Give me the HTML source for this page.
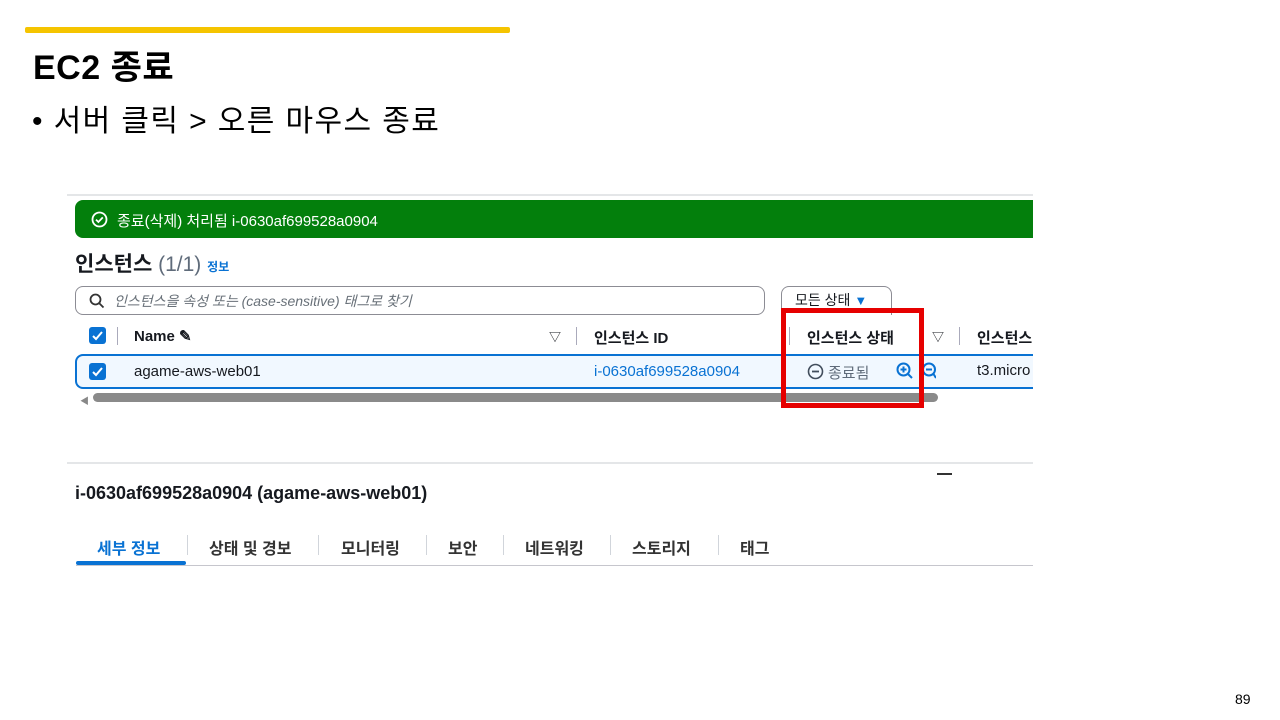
<!DOCTYPE html>
<html><head><meta charset="utf-8"><style>
*{margin:0;padding:0;box-sizing:border-box}
body{width:1280px;height:720px;background:#fff;position:relative;overflow:hidden;font-family:"Liberation Sans","Noto Sans CJK KR",sans-serif;color:#16191f}
.a{position:absolute;white-space:nowrap}
.sep{position:absolute;width:1px;background:#aab;}
</style></head><body>
<div class="a" style="left:25px;top:27px;width:485px;height:6px;background:#f5c400;border-radius:2px"></div>
<div class="a" style="left:33px;top:40px;font-size:34px;font-weight:bold;color:#000;letter-spacing:0.5px">EC2 종료</div>
<div class="a" style="left:32px;top:96px;font-size:30px;color:#000;letter-spacing:1.4px">• 서버 클릭 &gt; 오른 마우스 종료</div>

<div class="a" style="left:67px;top:194px;width:966px;height:2px;background:#e4e6e8"></div>
<div class="a" style="left:75px;top:200px;width:958px;height:38px;background:#037f0c;border-radius:8px 0 0 8px"></div>
<svg class="a" style="left:91px;top:211px" width="17" height="17" viewBox="0 0 17 17"><circle cx="8.5" cy="8.5" r="7" fill="none" stroke="#fff" stroke-width="1.8"/><path d="M5 8.6l2.4 2.4 4.4-4.6" fill="none" stroke="#fff" stroke-width="1.8"/></svg>
<div class="a" style="left:117px;top:210px;font-size:15px;color:#fff">종료(삭제) 처리됨 i-0630af699528a0904</div>

<div class="a" style="left:75px;top:248px;font-size:21px;font-weight:bold">인스턴스 <span style="font-weight:normal;color:#5f6b7a">(1/1)</span> <span style="font-size:12px;color:#0972d3;font-weight:bold">정보</span></div>

<div class="a" style="left:75px;top:286px;width:690px;height:29px;border:1.5px solid #8c8c94;border-radius:8px"></div>
<svg class="a" style="left:89px;top:293px" width="16" height="16" viewBox="0 0 16 16"><circle cx="6.5" cy="6.5" r="5" fill="none" stroke="#333" stroke-width="1.8"/><path d="M10 10l4.5 4.5" stroke="#333" stroke-width="1.8"/></svg>
<div class="a" style="left:114px;top:291px;font-size:14px;color:#687078;font-style:italic">인스턴스을 속성 또는 (case-sensitive) 태그로 찾기</div>
<div class="a" style="left:781px;top:286px;width:111px;height:29px;border:1.5px solid #8c8c94;border-radius:8px 8px 0 0;border-bottom:none"></div>
<div class="a" style="left:795px;top:290px;font-size:14px">모든 상태 <span style="color:#0972d3;font-size:13px">▼</span></div>

<div class="a" style="left:89px;top:327px;width:17px;height:17px;background:#0972d3;border-radius:3px"></div>
<svg class="a" style="left:89px;top:327px" width="17" height="17"><path d="M4 9l3 3 6-7" fill="none" stroke="#fff" stroke-width="2"/></svg>
<div class="sep" style="left:117px;top:327px;height:18px"></div>
<div class="a" style="left:134px;top:327px;font-size:15px;font-weight:bold">Name ✎</div>
<div class="a" style="left:549px;top:328px;font-size:12px">▽</div>
<div class="sep" style="left:576px;top:327px;height:18px"></div>
<div class="a" style="left:594px;top:327px;font-size:15px;font-weight:bold">인스턴스 ID</div>
<div class="sep" style="left:789px;top:327px;height:18px"></div>
<div class="a" style="left:807px;top:327px;font-size:15px;font-weight:bold">인스턴스 상태</div>
<div class="a" style="left:932px;top:328px;font-size:12px">▽</div>
<div class="sep" style="left:959px;top:327px;height:18px"></div>
<div class="a" style="left:977px;top:327px;font-size:15px;font-weight:bold">인스턴스</div>

<div class="a" style="left:75px;top:354px;width:958px;height:35px;background:#f1f8ff;border:2px solid #0972d3;border-right:none;border-radius:8px 0 0 8px"></div>
<div class="a" style="left:89px;top:363px;width:17px;height:17px;background:#0972d3;border-radius:3px"></div>
<svg class="a" style="left:89px;top:363px" width="17" height="17"><path d="M4 9l3 3 6-7" fill="none" stroke="#fff" stroke-width="2"/></svg>
<div class="a" style="left:134px;top:363px;font-size:15px">agame-aws-web01</div>
<div class="a" style="left:594px;top:363px;font-size:15px;color:#0972d3">i-0630af699528a0904</div>
<svg class="a" style="left:807px;top:363px" width="17" height="17"><circle cx="8.5" cy="8.5" r="7" fill="none" stroke="#414d5c" stroke-width="1.6"/><path d="M5 8.5h7" stroke="#414d5c" stroke-width="1.8"/></svg>
<div class="a" style="left:828px;top:362px;font-size:15px;color:#5f6b7a">종료됨</div>
<svg class="a" style="left:896px;top:362px" width="40" height="18"><circle cx="7.5" cy="7.5" r="6" fill="none" stroke="#0972d3" stroke-width="2"/><path d="M12 12l4 4M4.5 7.5h6M7.5 4.5v6" stroke="#0972d3" stroke-width="2"/><circle cx="33" cy="7.5" r="6" fill="none" stroke="#0972d3" stroke-width="2"/><path d="M37.5 12l2.5 4M30 7.5h6" stroke="#0972d3" stroke-width="2"/></svg>
<div class="a" style="left:977px;top:362px;font-size:15px">t3.micro</div>

<div class="a" style="left:80px;top:394px;font-size:9px;color:#888">◀</div>
<div class="a" style="left:93px;top:393px;width:845px;height:9px;background:#8a8a8a;border-radius:5px"></div>

<div class="a" style="left:781px;top:308px;width:143px;height:100px;border:5px solid #e60000"></div>

<div class="a" style="left:67px;top:462px;width:966px;height:2px;background:#e4e6e8"></div>
<div class="a" style="left:937px;top:473px;width:15px;height:2px;background:#333"></div>
<div class="a" style="left:75px;top:483px;font-size:18px;font-weight:bold">i-0630af699528a0904 (agame-aws-web01)</div>
<div class="a" style="left:97px;top:535px;font-size:16px;font-weight:bold;color:#0972d3">세부 정보</div>
<div class="a" style="left:76px;top:561px;width:110px;height:4px;background:#0972d3;border-radius:2px"></div>
<div class="a" style="left:76px;top:565px;width:957px;height:1px;background:#c6c6cd"></div>
<div class="sep" style="left:187px;top:535px;height:20px;background:#d1d5db"></div>
<div class="a" style="left:209px;top:535px;font-size:16px;font-weight:bold;color:#333">상태 및 경보</div>
<div class="sep" style="left:318px;top:535px;height:20px;background:#d1d5db"></div>
<div class="a" style="left:341px;top:535px;font-size:16px;font-weight:bold;color:#333">모니터링</div>
<div class="sep" style="left:426px;top:535px;height:20px;background:#d1d5db"></div>
<div class="a" style="left:448px;top:535px;font-size:16px;font-weight:bold;color:#333">보안</div>
<div class="sep" style="left:503px;top:535px;height:20px;background:#d1d5db"></div>
<div class="a" style="left:525px;top:535px;font-size:16px;font-weight:bold;color:#333">네트워킹</div>
<div class="sep" style="left:610px;top:535px;height:20px;background:#d1d5db"></div>
<div class="a" style="left:632px;top:535px;font-size:16px;font-weight:bold;color:#333">스토리지</div>
<div class="sep" style="left:718px;top:535px;height:20px;background:#d1d5db"></div>
<div class="a" style="left:740px;top:535px;font-size:16px;font-weight:bold;color:#333">태그</div>

<div class="a" style="left:1235px;top:691px;font-size:14px;color:#000">89</div>
</body></html>
